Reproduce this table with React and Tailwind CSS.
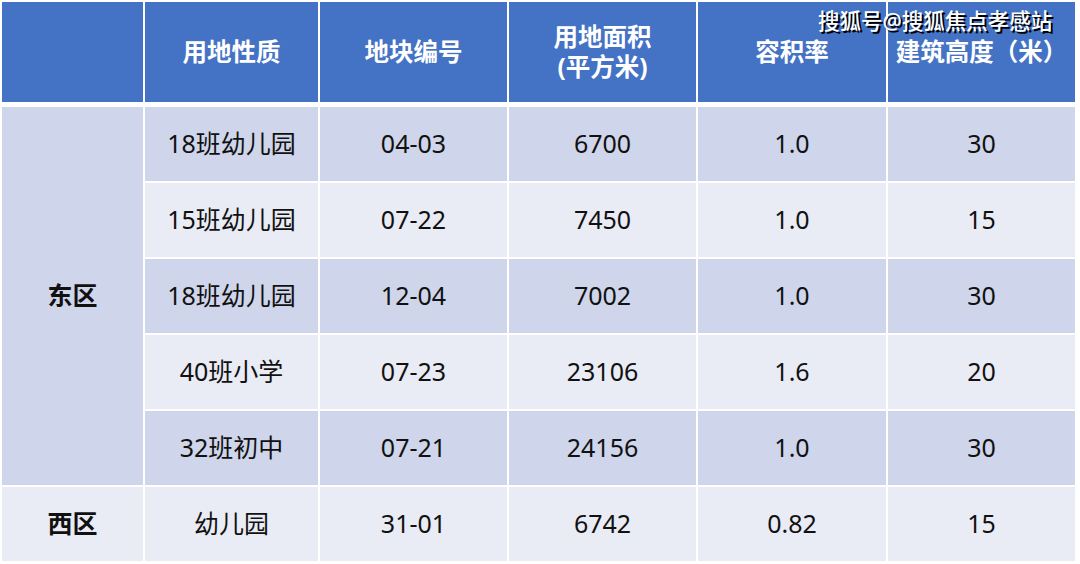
import React from 'react';

const rows = [
    ['18班幼儿园', '04-03', '6700', '1.0', '30'],
    ['15班幼儿园', '07-22', '7450', '1.0', '15'],
    ['18班幼儿园', '12-04', '7002', '1.0', '30'],
    ['40班小学', '07-23', '23106', '1.6', '20'],
    ['32班初中', '07-21', '24156', '1.0', '30'],
];

const dark = 'bg-[#cfd5ea]';
const light = 'bg-[#e9ebf5]';

function Head({ children }) {
    return (
        <div className="h-[100px] self-start bg-[#4472c4] flex flex-col items-center justify-center text-white font-bold text-[24.5px] leading-[30px] text-center">
            {children}
        </div>
    );
}

function Cell({ children, tone, bold }) {
    return (
        <div className={`${tone} flex items-center justify-center text-[25px] text-[#111] ${bold ? 'font-bold' : ''}`}>
            {children}
        </div>
    );
}

export default function App() {
    return (
        <div
            className="relative w-[1080px] h-[564px] bg-white pl-[2px] pt-[2px] overflow-hidden"
            style={{ fontFamily: '"Noto Sans", "Noto Sans CJK SC", sans-serif' }}
        >
            <div className="grid grid-cols-[141px_173px_187px_187px_188px_187px] grid-rows-[103px_74px_74px_74px_74px_74px_74px] gap-[2px]">
                <Head />
                <Head>用地性质</Head>
                <Head>地块编号</Head>
                <Head>
                    <span>用地面积</span>
                    <span>(平方米)</span>
                </Head>
                <Head>容积率</Head>
                <Head>建筑高度（米）</Head>

                <div className={`${dark} row-span-5 flex items-center justify-center text-[25px] font-bold text-[#111]`}>
                    东区
                </div>
                {rows.map((r, i) =>
                    r.map((v, j) => (
                        <Cell key={`${i}-${j}`} tone={i % 2 === 0 ? dark : light}>
                            {v}
                        </Cell>
                    ))
                )}

                <Cell tone={light} bold>西区</Cell>
                <Cell tone={light}>幼儿园</Cell>
                <Cell tone={light}>31-01</Cell>
                <Cell tone={light}>6742</Cell>
                <Cell tone={light}>0.82</Cell>
                <Cell tone={light}>15</Cell>
            </div>

            {/* watermark */}
            <div className="absolute top-[7px] left-[818px] text-white text-[21.5px] font-medium leading-[28px] whitespace-nowrap [text-shadow:2px_2px_0_#000]">
                搜狐号@搜狐焦点孝感站
            </div>
        </div>
    );
}
